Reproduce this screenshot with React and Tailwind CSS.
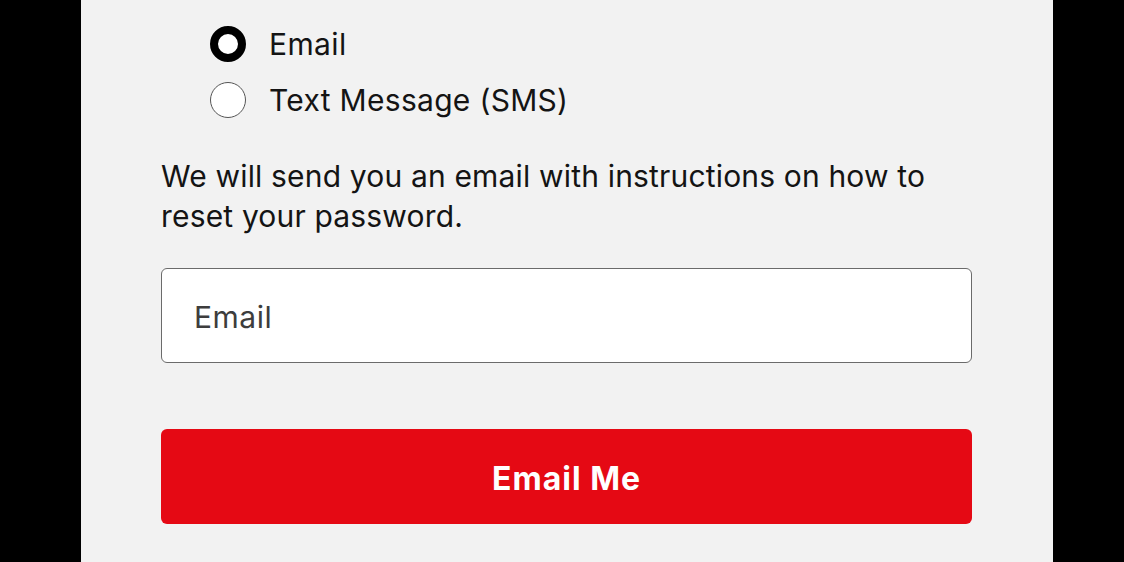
export default function App() {
  return (
    <div className="flex h-[562px] w-full overflow-hidden bg-black pl-[81px]" style={{ fontFamily: 'Inter, "Noto Sans", sans-serif' }}>
      <div className="flex w-[972px] flex-col bg-[#f2f2f2] pl-[80px] pr-[81px]">
        <div className="ml-[49px] mt-[26px] flex flex-col gap-[20px]">
          <label className="flex items-center gap-[23px]">
            <span className="h-[36px] w-[36px] rounded-full border-[8px] border-black bg-white" />
            <span className="text-[30px] leading-[36px] tracking-[0.4px] text-[#141414]">Email</span>
          </label>
          <label className="flex items-center gap-[23px]">
            <span className="h-[36px] w-[36px] rounded-full border border-[#555] bg-white" />
            <span className="text-[30px] leading-[36px] tracking-[0.3px] text-[#141414]">Text Message (SMS)</span>
          </label>
        </div>

        <p className="mt-[38px] text-[30px] leading-[40px] tracking-[0.17px] text-[#141414]">
          We will send you an email with instructions on how to reset your password.
        </p>

        <div className="mt-[32px] flex h-[95px] items-center rounded-[6px] border border-[#6b6b6b] bg-white px-[32px] pt-[3px]">
          <span className="text-[30px] tracking-[0.5px] text-[#3d3d3d]">Email</span>
        </div>

        <button className="mt-[66px] flex h-[95px] items-center justify-center rounded-[6px] bg-[#e50914] pt-[4px] text-[32px] font-bold tracking-[1px] text-white">
          Email Me
        </button>
      </div>
    </div>
  );
}
